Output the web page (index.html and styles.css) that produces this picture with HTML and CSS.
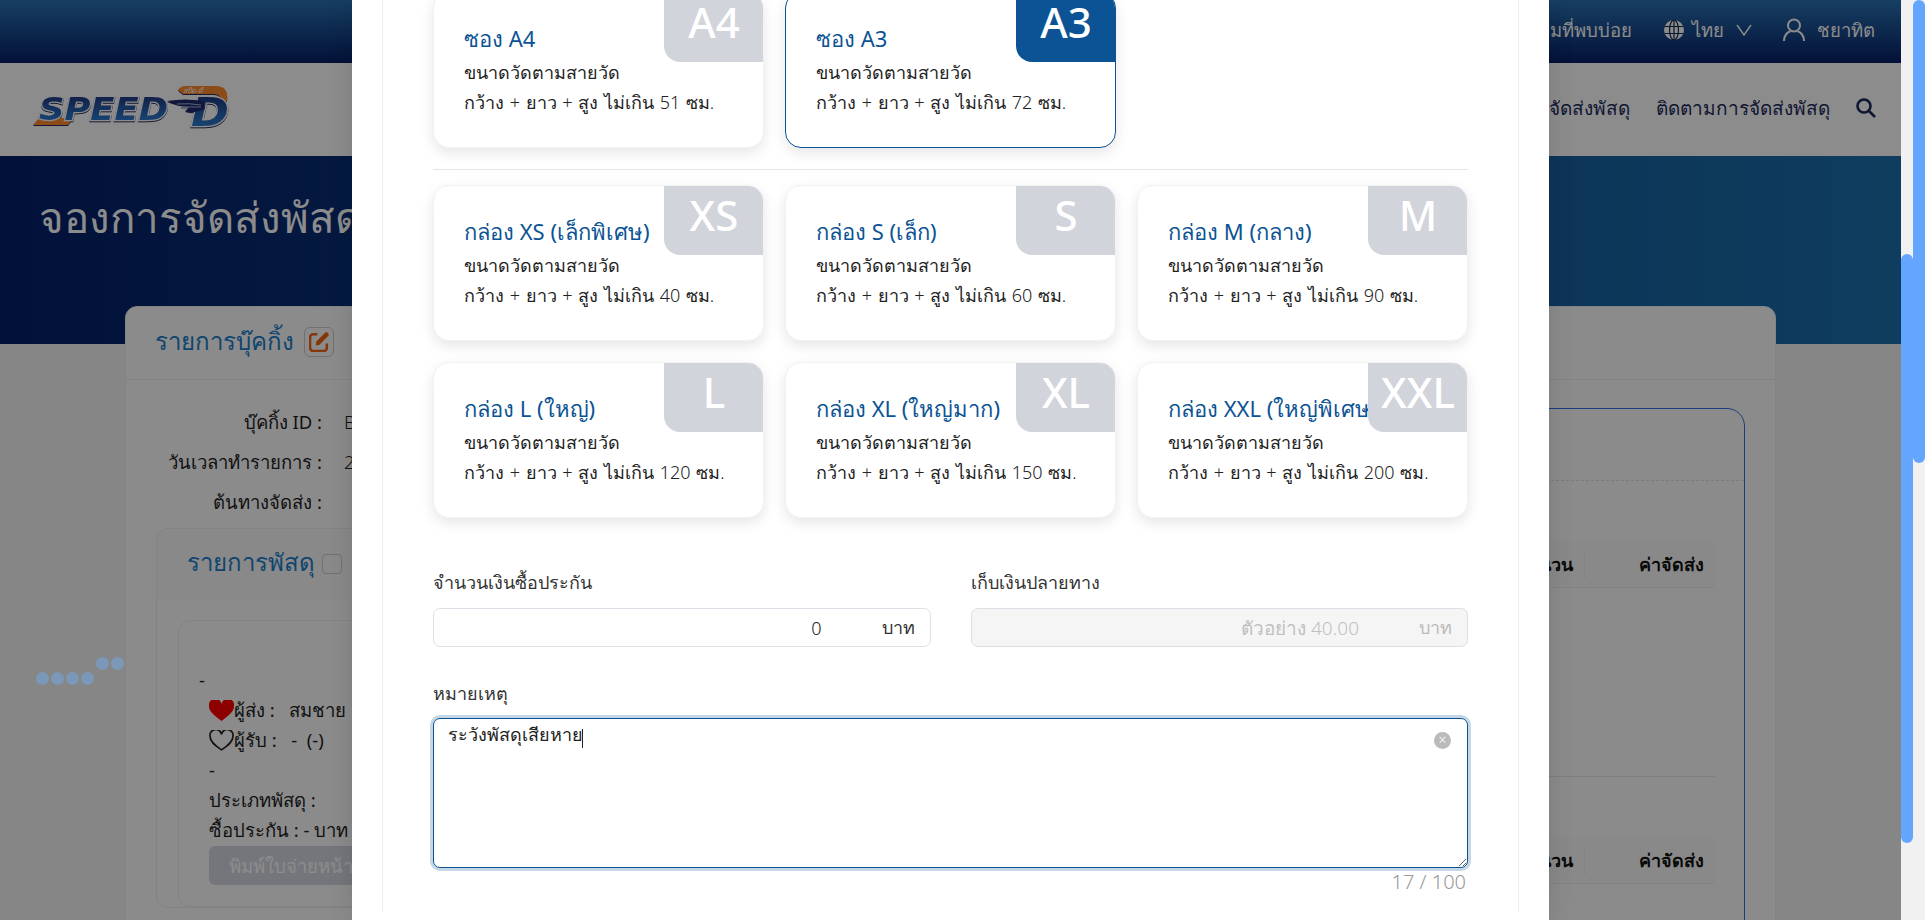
FILE: index.html
```html
<!DOCTYPE html>
<html lang="th">
<head>
    <meta charset="UTF-8">
    <meta name="viewport" content="width=device-width, initial-scale=1.0">
    <title>จองการจัดส่งพัสดุ</title>
    <link rel="stylesheet" href="styles.css">
</head>
<body>
    <div class="stage">
        <!-- Page behind the modal -->
        <div class="page">
            <div class="topbar">
                <span>คำถามที่พบบ่อย</span>
                <span class="topbar-item">
                    <svg class="icon-globe" viewBox="0 0 20 20"><circle cx="10" cy="10" r="10" fill="currentColor"/><g fill="none" stroke="#0f2a52" stroke-width="1.2"><ellipse cx="10" cy="10" rx="4.5" ry="10"/><path d="M0.5 6.5h19M0.5 13.5h19M10 0v20"/></g></svg>
                    ไทย
                    <svg class="icon-chevron" viewBox="0 0 16 12"><path d="M1 1l7 10 7-10" fill="none" stroke="currentColor" stroke-width="1.4"/></svg>
                </span>
                <span class="topbar-item user">
                    <svg class="icon-user" viewBox="0 0 22 24"><g fill="none" stroke="currentColor" stroke-width="2"><circle cx="11" cy="7.5" r="6"/><path d="M1 23c0-6 4-9.500 6.500-9.500M21 23c0-6-4-9.500-6.500-9.500"/></g></svg>
                    ชยาทิต
                </span>
            </div>

            <div class="navbar">
                <svg class="logo" viewBox="0 0 200 44">
                    <defs>
                        <linearGradient id="logoBlue" x1="0" y1="0" x2="0" y2="1">
                            <stop offset="0" stop-color="#1d2a70"/>
                            <stop offset="1" stop-color="#2f8fe6"/>
                        </linearGradient>
                    </defs>
                    <path d="M147 5q2-4 8-4h30q13 0 11 15h-7q1-7-6-7h-31z" fill="#ff8a30"/>
                    <text class="logo-small" x="152" y="8">สปีด-ดี</text>
                    <path d="M8 33h34l-5 7H2z" fill="#ff8a30"/>
                    <text class="logo-word" x="8" y="35" textLength="129" lengthAdjust="spacingAndGlyphs">SPEED</text>
                    <text class="logo-word logo-d" x="160" y="41" textLength="38" lengthAdjust="spacingAndGlyphs">D</text>
                    <path d="M136 16q18-3 36 0l2 8q-12 5-20 2 5-3 3-5-9 0-21-5z" fill="#1d2a70"/>
                    <path d="M146 19q12-1 24 1M150 22q9 0 20 0" fill="none" stroke="#c8d4ea" stroke-width="0.8"/>
                </svg>
                <nav class="nav-links">
                    <a>จองการจัดส่งพัสดุ</a>
                    <a>ติดตามการจัดส่งพัสดุ</a>
                    <svg class="icon-search" viewBox="0 0 20 20"><g fill="none" stroke="currentColor" stroke-width="2.600"><circle cx="8" cy="8" r="6.500"/><path d="M13 13l6 6"/></g></svg>
                </nav>
            </div>

            <div class="hero">
                <h1>จองการจัดส่งพัสดุ</h1>
            </div>

            <div class="booking">
                <div class="booking-head">
                    <h2>รายการบุ๊คกิ้ง</h2>
                    <span class="edit-btn">
                        <svg viewBox="0 0 20 20"><path d="M8 3H4a3 3 0 0 0-3 3v10a3 3 0 0 0 3 3h10a3 3 0 0 0 3-3v-4" fill="none" stroke="#f0640f" stroke-width="2.400"/><path d="M7 10L15.500 1.500a1.500 1.500 0 0 1 2 0l1 1a1.500 1.500 0 0 1 0 2L10 13l-3.500.7z" fill="#f0640f"/></svg>
                    </span>
                </div>
                <div class="booking-body">
                    <div class="booking-left">
                        <dl class="info">
                            <dt>บุ๊คกิ้ง ID :</dt><dd>BK000000</dd>
                            <dt>วันเวลาทำรายการ :</dt><dd>2568-01-01</dd>
                            <dt>ต้นทางจัดส่ง :</dt><dd></dd>
                        </dl>
                        <div class="parcels">
                            <div class="parcels-head">
                                <h3>รายการพัสดุ</h3>
                                <span class="check"></span>
                            </div>
                            <div class="parcel">
                                <div class="parcel-code">-</div>
                                <div class="parcel-lines">
                                    <div class="person">
                                        <svg viewBox="0 0 24 20"><path d="M12 20C5 15 0 11 0 6a6 6 0 0 1 12-2.500A6 6 0 0 1 24 6c0 5-5 9-12 14z" fill="#f00"/></svg>
                                        <span>ผู้ส่ง : &nbsp;&nbsp;สมชาย สมชาย</span>
                                    </div>
                                    <div class="person">
                                        <svg viewBox="0 0 24 20"><path d="M12 19C5 14.500 1 11 1 6a5 5 0 0 1 11-2 5 5 0 0 1 11 2c0 5-4 8.500-11 13z" fill="none" stroke="#222" stroke-width="1.600"/></svg>
                                        <span>ผู้รับ : &nbsp;&nbsp;- &nbsp;(-)</span>
                                    </div>
                                    <div>-</div>
                                    <div>ประเภทพัสดุ :</div>
                                    <div>ซื้อประกัน : - บาท</div>
                                    <button class="print-btn">พิมพ์ใบจ่ายหน้าพัสดุ</button>
                                </div>
                            </div>
                        </div>
                    </div>
                    <div class="summary">
                        <div class="summary-head"></div>
                        <div class="summary-table">
                            <div class="table-head"><span class="col-qty">จำนวน</span><span class="col-fee">ค่าจัดส่ง</span></div>
                            <div class="table-row"></div>
                            <div class="table-head"><span class="col-qty">จำนวน</span><span class="col-fee">ค่าจัดส่ง</span></div>
                        </div>
                    </div>
                </div>
            </div>
        </div>

        <!-- Modal -->
        <div class="overlay">
            <div class="modal">
                <div class="modal-inner">
                    <div class="size-grid first-row">
                        <div class="size-card">
                            <span class="badge">A4</span>
                            <h4>ซอง A4</h4>
                            <p>ขนาดวัดตามสายวัด</p>
                            <p>กว้าง + ยาว + สูง ไม่เกิน 51 ซม.</p>
                        </div>
                        <div class="size-card active">
                            <span class="badge">A3</span>
                            <h4>ซอง A3</h4>
                            <p>ขนาดวัดตามสายวัด</p>
                            <p>กว้าง + ยาว + สูง ไม่เกิน 72 ซม.</p>
                        </div>
                    </div>
                    <hr class="divider">
                    <div class="size-grid">
                        <div class="size-card">
                            <span class="badge">XS</span>
                            <h4>กล่อง XS (เล็กพิเศษ)</h4>
                            <p>ขนาดวัดตามสายวัด</p>
                            <p>กว้าง + ยาว + สูง ไม่เกิน 40 ซม.</p>
                        </div>
                        <div class="size-card">
                            <span class="badge">S</span>
                            <h4>กล่อง S (เล็ก)</h4>
                            <p>ขนาดวัดตามสายวัด</p>
                            <p>กว้าง + ยาว + สูง ไม่เกิน 60 ซม.</p>
                        </div>
                        <div class="size-card">
                            <span class="badge">M</span>
                            <h4>กล่อง M (กลาง)</h4>
                            <p>ขนาดวัดตามสายวัด</p>
                            <p>กว้าง + ยาว + สูง ไม่เกิน 90 ซม.</p>
                        </div>
                        <div class="size-card">
                            <span class="badge">L</span>
                            <h4>กล่อง L (ใหญ่)</h4>
                            <p>ขนาดวัดตามสายวัด</p>
                            <p>กว้าง + ยาว + สูง ไม่เกิน 120 ซม.</p>
                        </div>
                        <div class="size-card">
                            <span class="badge">XL</span>
                            <h4>กล่อง XL (ใหญ่มาก)</h4>
                            <p>ขนาดวัดตามสายวัด</p>
                            <p>กว้าง + ยาว + สูง ไม่เกิน 150 ซม.</p>
                        </div>
                        <div class="size-card">
                            <span class="badge">XXL</span>
                            <h4>กล่อง XXL (ใหญ่พิเศษ)</h4>
                            <p>ขนาดวัดตามสายวัด</p>
                            <p>กว้าง + ยาว + สูง ไม่เกิน 200 ซม.</p>
                        </div>
                    </div>

                    <div class="form-row">
                        <div class="field">
                            <label>จำนวนเงินซื้อประกัน</label>
                            <div class="money">
                                <input type="text" value="0">
                                <span>บาท</span>
                            </div>
                        </div>
                        <div class="field">
                            <label>เก็บเงินปลายทาง</label>
                            <div class="money disabled">
                                <input type="text" placeholder="ตัวอย่าง 40.00" disabled>
                                <span>บาท</span>
                            </div>
                        </div>
                    </div>

                    <div class="field note">
                        <label>หมายเหตุ</label>
                        <div class="note-box">
                            <textarea>ระวังพัสดุเสียหาย</textarea>
                            <span class="caret"></span>
                            <span class="clear">×</span>
                        </div>
                        <div class="counter">17 / 100</div>
                    </div>
                </div>
            </div>
        </div>

        <div class="dots">
            <i></i><i></i><i></i><i></i><i class="up"></i><i class="up"></i>
        </div>
    </div>

    <div class="scroll-track inner"><div class="scroll-thumb"></div></div>
    <div class="scroll-track outer"><div class="scroll-thumb"></div></div>
</body>
</html>
```

FILE: styles.css
```css
/* Base */
* {
    box-sizing: border-box;
}

html, body {
    height: 100%;
}

body {
    margin: 0;
    display: flex;
    overflow: hidden;
    font-family: "Noto Sans", "Open Sans", sans-serif;
    font-size: 18px;
    font-weight: 300;
    color: #222;
    background-color: #f5f5f5;
}

h1, h2, h3, h4, p, dl, dd {
    margin: 0;
    font-weight: 300;
}

.stage {
    position: relative;
    flex: 1;
    min-width: 0;
    overflow: hidden;
}

/* Scrollbars */
.scroll-track {
    width: 12px;
    flex-shrink: 0;
    background-color: #f1f1f1;
}

.scroll-thumb {
    background-color: #64a6ff;
    border-radius: 6px;
}

.scroll-track.inner .scroll-thumb {
    margin-top: 254px;
    height: 589px;
}

.scroll-track.outer .scroll-thumb {
    height: 463px;
}

/* Top bar */
.topbar {
    height: 63px;
    display: flex;
    justify-content: flex-end;
    align-items: center;
    gap: 32px;
    padding: 0 26px 3px 0;
    background: linear-gradient(180deg, #2a74b4, #071f66);
    color: #fff;
    font-size: 18.500px;
}

.topbar-item {
    display: flex;
    align-items: center;
    gap: 8px;
}

.topbar-item.user {
    gap: 12px;
    margin-left: -1px;
}

.icon-globe {
    width: 20px;
    height: 20px;
}

.icon-chevron {
    width: 16px;
    height: 12px;
    margin-left: 4px;
}

.icon-user {
    width: 22px;
    height: 24px;
}

/* Navbar */
.navbar {
    height: 93px;
    display: flex;
    justify-content: space-between;
    align-items: center;
    padding: 0 25px 0 30px;
    background-color: #fff;
}

.logo {
    width: 202px;
    height: 44px;
    margin-top: -6px;
    filter: drop-shadow(0 1px 0 #2a2f60);
}

.logo-word {
    font-family: "DejaVu Sans", sans-serif;
    font-size: 32px;
    font-weight: 700;
    font-style: italic;
    fill: url(#logoBlue);
    stroke: #fff;
    stroke-width: 2.500px;
    paint-order: stroke;
}

.logo-d {
    font-size: 39px;
}

.logo-small {
    font-size: 7px;
    font-style: italic;
    fill: #fff;
}

.nav-links {
    display: flex;
    align-items: center;
    gap: 26px;
    margin-top: -3px;
    color: #1b2a5c;
    font-size: 19px;
}

.icon-search {
    width: 20px;
    height: 20px;
}

/* Hero */
.hero {
    height: 188px;
    padding: 33px 39px 0;
    background: linear-gradient(90deg, #041f69, #1b70ad);
}

.hero h1 {
    color: #fff;
    font-size: 42px;
    font-weight: 500;
    line-height: 56px;
}

/* Booking card */
.booking {
    margin: -38px 125px 0;
    background-color: #fdfdfd;
    border: 1px solid #f0f0f0;
    border-radius: 12px;
    height: 800px;
}

.booking-head {
    height: 73px;
    display: flex;
    align-items: center;
    gap: 10px;
    padding: 0 0 3px 29px;
    border-bottom: 1px solid #eee;
}

.booking-head h2 {
    font-size: 24px;
    font-weight: 400;
    color: #1b7fcc;
}

.edit-btn {
    width: 30px;
    height: 30px;
    display: flex;
    justify-content: center;
    align-items: center;
    border: 1px solid #ccc;
    border-radius: 6px;
}

.edit-btn svg {
    width: 21px;
    height: 21px;
}

.booking-body {
    display: flex;
    justify-content: space-between;
    padding: 28px 30px 0 30px;
}

.booking-left {
    width: 700px;
}

.info {
    display: grid;
    grid-template-columns: 166px 1fr;
    column-gap: 22px;
    row-gap: 11px;
    margin-top: -1px;
    line-height: 29px;
    font-size: 18.500px;
    font-weight: 400;
}

.info dt {
    text-align: right;
}

.parcels {
    margin-top: 12px;
    border: 1px solid #eee;
    border-radius: 12px;
}

.parcels-head {
    height: 71px;
    display: flex;
    align-items: center;
    gap: 7px;
    padding: 0 0 4px 30px;
    background-color: #fafafa;
    border-radius: 12px 12px 0 0;
}

.parcels-head h3 {
    font-size: 24px;
    font-weight: 400;
    color: #1b7fcc;
}

.check {
    width: 20px;
    height: 20px;
    margin-top: 3px;
    border: 1px solid #ccc;
    border-radius: 4px;
}

.parcel {
    margin: 20px 21px 0;
    height: 287px;
    padding: 44px 20px 0;
    border: 1px solid #eee;
    border-radius: 12px;
    font-size: 18.500px;
    font-weight: 400;
}

.parcel-code {
    line-height: 30px;
}

.parcel-lines {
    padding-left: 10px;
    line-height: 30px;
}

.person {
    display: flex;
    align-items: center;
}

.person svg {
    width: 25px;
    height: 21px;
}

.print-btn {
    display: block;
    width: 300px;
    height: 39px;
    margin-top: 1px;
    border: none;
    border-radius: 6px;
    background-color: #d5d8e0;
    color: #fff;
    font: inherit;
    text-align: left;
    padding-left: 20px;
}

/* Right summary */
.summary {
    width: 700px;
    height: 700px;
    border: 1px solid #2f6fe0;
    border-radius: 18px;
}

.summary-head {
    height: 72px;
    border-bottom: 1px dashed #e0e0e0;
}

.summary-table {
    padding: 60px 29px 0;
}

.table-head {
    height: 47px;
    display: flex;
    justify-content: flex-end;
    align-items: center;
    padding-right: 11px;
    background-color: #fafafa;
    border-bottom: 1px solid #eee;
    font-size: 18px;
    font-weight: 700;
    color: #111;
}

.col-qty {
    padding-right: 11px;
    margin-right: 54px;
    border-right: 1px solid #eee;
}

.table-row {
    height: 189px;
    margin-bottom: 60px;
    border-bottom: 1px solid #e6e6e6;
}

/* Floating dots */
.dots {
    position: absolute;
    left: 36px;
    top: 657px;
    display: flex;
    gap: 2px;
}

.dots i {
    width: 13px;
    height: 13px;
    margin-top: 15px;
    border-radius: 50%;
    background-color: #7b98b8;
}

.dots i.up {
    margin-top: 0;
}

/* Modal */
.overlay {
    position: absolute;
    inset: 0;
    display: flex;
    justify-content: center;
    background-color: rgba(0, 0, 0, 0.45);
}

.modal {
    width: 1197px;
    padding: 0 30px;
    background-color: #fff;
    box-shadow: 0 0 24px rgba(0, 0, 0, 0.12);
}

.modal-inner {
    height: 100%;
    padding: 0 50px;
    border-left: 1px solid #eee;
    border-right: 1px solid #eee;
}

/* Size cards */
.size-grid {
    display: grid;
    grid-template-columns: repeat(3, 1fr);
    gap: 21px;
}

.size-grid.first-row {
    margin-top: -8px;
}

.size-card {
    position: relative;
    height: 156px;
    padding: 30px 30px 0;
    overflow: hidden;
    white-space: nowrap;
    background-color: #fff;
    border: 1px solid #f2f2f2;
    border-radius: 16px;
    box-shadow: 0 5px 14px rgba(0, 0, 0, 0.1);
}

.size-card.active {
    border-color: #0b5394;
}

.size-card h4 {
    font-size: 22px;
    font-weight: 400;
    line-height: 30px;
    margin-bottom: 4px;
    color: #0b5394;
}

.size-card p {
    font-size: 18px;
    line-height: 30px;
    word-spacing: 1px;
}

.badge {
    position: absolute;
    top: -1px;
    right: -1px;
    width: 100px;
    height: 70px;
    padding-top: 3px;
    text-align: center;
    font-size: 42px;
    line-height: 54px;
    font-weight: 500;
    color: #fff;
    background-color: #d1d4db;
    border-radius: 0 0 0 16px;
}

.size-card.active .badge {
    background-color: #0b5394;
}

.divider {
    margin: 21px 0 15px;
    border: none;
    border-top: 1px solid #e5e5e5;
}

/* Form */
.form-row {
    display: grid;
    grid-template-columns: 1fr 1fr;
    gap: 40px;
    margin-top: 49px;
}

.field label {
    display: block;
    height: 30px;
    line-height: 30px;
    font-size: 18px;
    color: #333;
}

.money {
    display: flex;
    align-items: center;
    height: 39px;
    margin-top: 11px;
    padding: 0 15px;
    background-color: #fff;
    border: 1px solid #dcdfe6;
    border-radius: 7px;
    font-size: 18px;
}

.money input {
    flex: 1;
    min-width: 0;
    border: none;
    outline: none;
    padding: 0;
    background: none;
    font: inherit;
    color: #222;
    text-align: right;
}

.money span {
    margin-left: 60px;
    color: #333;
}

.money.disabled {
    background-color: #f5f5f5;
}

.money.disabled input {
    font-size: 19px;
}

.money.disabled input::placeholder {
    color: #c0c0c0;
}

.money.disabled span {
    color: #bbb;
}

.note {
    margin-top: 31px;
}

.note-box {
    position: relative;
    margin-top: 10px;
}

.note-box textarea {
    display: block;
    width: 100%;
    height: 150px;
    padding: 1px 14px;
    border: 1px solid #0b5394;
    border-radius: 7px;
    outline: none;
    box-shadow: 0 0 0 3px #c5d6e4;
    font: inherit;
    color: #222;
    resize: vertical;
}

.caret {
    position: absolute;
    top: 11px;
    left: 149px;
    width: 1px;
    height: 19px;
    background-color: #222;
}

.clear {
    position: absolute;
    top: 14px;
    right: 17px;
    width: 17px;
    height: 17px;
    border-radius: 50%;
    background-color: #bbb;
    color: #fff;
    font-size: 14px;
    line-height: 16px;
    text-align: center;
}

.counter {
    margin-top: 1px;
    padding-right: 2px;
    text-align: right;
    font-size: 20px;
    line-height: 25px;
    color: #999;
}
```
